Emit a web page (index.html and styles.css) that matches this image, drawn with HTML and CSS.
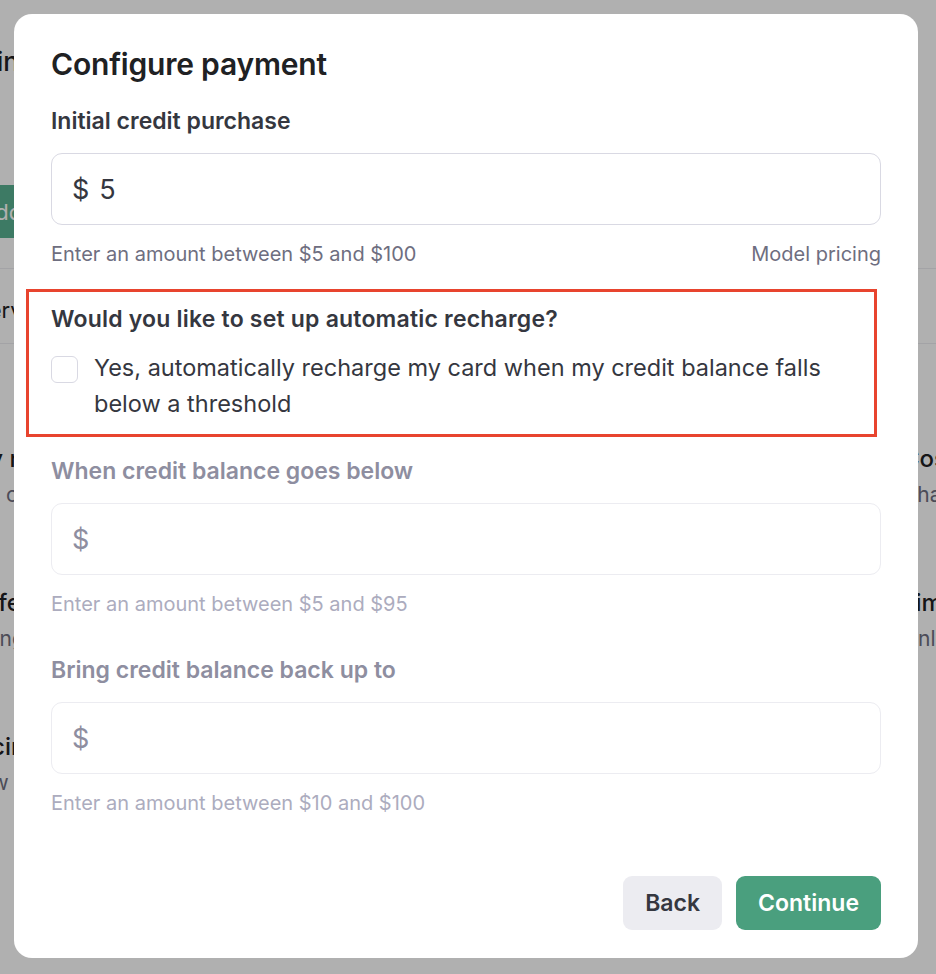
FILE: index.html
```html
<!DOCTYPE html>
<html lang="en">
<head>
    <meta charset="UTF-8">
    <meta name="viewport" content="width=device-width, initial-scale=1.0">
    <title>Configure payment</title>
    <link rel="stylesheet" href="styles.css">
</head>
<body>
    <!-- Billing page behind the dialog -->
    <div class="page">
        <h1 class="page-title">Billing</h1>
        <button class="page-button">Add payment details</button>
        <nav class="page-tabs">
            <span>Overview</span>
        </nav>
        <div class="page-grid">
            <div class="tile">
                <h3>Key rotation</h3>
                <p>Add or change card</p>
            </div>
            <div class="tile tile-right">
                <h3>Costs</h3>
                <p>Charts</p>
            </div>
            <div class="tile">
                <h3>Preferences</h3>
                <p>Change name</p>
            </div>
            <div class="tile tile-right">
                <h3>Limits</h3>
                <p>Only</p>
            </div>
            <div class="tile">
                <h3>Pricing</h3>
                <p>View rates</p>
            </div>
        </div>
    </div>

    <div class="overlay"></div>

    <div class="modal" role="dialog" aria-labelledby="modal-title">
        <h2 class="modal-title" id="modal-title">Configure payment</h2>

        <label class="field-label" for="initial-amount">Initial credit purchase</label>
        <div class="amount-input">
            <span class="currency">$</span>
            <input id="initial-amount" type="text" value="5">
        </div>
        <div class="field-hint">
            <span>Enter an amount between $5 and $100</span>
            <a href="#" class="hint-link">Model pricing</a>
        </div>

        <!-- highlighted question -->
        <section class="recharge">
            <h3 class="recharge-title">Would you like to set up automatic recharge?</h3>
            <label class="check-row">
                <input type="checkbox" class="checkbox">
                <span>Yes, automatically recharge my card when my credit balance falls below a threshold</span>
            </label>
        </section>

        <label class="field-label is-disabled after-recharge" for="threshold">When credit balance goes below</label>
        <div class="amount-input is-disabled">
            <span class="currency">$</span>
            <input id="threshold" type="text" disabled>
        </div>
        <div class="field-hint is-disabled">
            <span>Enter an amount between $5 and $95</span>
        </div>

        <label class="field-label is-disabled gap-top" for="target">Bring credit balance back up to</label>
        <div class="amount-input is-disabled">
            <span class="currency">$</span>
            <input id="target" type="text" disabled>
        </div>
        <div class="field-hint is-disabled">
            <span>Enter an amount between $10 and $100</span>
        </div>

        <div class="modal-actions">
            <button class="btn btn-secondary">Back</button>
            <button class="btn btn-primary">Continue</button>
        </div>
    </div>
</body>
</html>
```

FILE: styles.css
```css
* {
    margin: 0;
    padding: 0;
    box-sizing: border-box;
}

body {
    font-family: Inter, "Noto Sans", Arial, sans-serif;
    background: #fff;
    color: #202123;
    width: 936px;
    height: 974px;
    overflow: hidden;
}

/* Page behind the dialog */
.page {
    margin-left: -40px;
    width: 1400px;
    padding-top: 44px;
}

.page-title {
    font-size: 26px;
    font-weight: 500;
    line-height: 36px;
    color: #202123;
}

.page-button {
    margin-top: 105px;
    height: 53px;
    padding: 0 20px;
    border: none;
    border-radius: 6px;
    background: #59b191;
    color: #fff;
    font: inherit;
    font-size: 22px;
}

.page-tabs {
    margin-top: 30px;
    border-top: 1px solid #ececf1;
    border-bottom: 1px solid #ececf1;
    padding: 30px 0 22px;
    font-size: 22px;
    line-height: 22px;
    color: #202123;
}

.page-grid {
    display: grid;
    grid-template-columns: 470px 470px 470px;
    row-gap: 80px;
    padding-top: 100px;
}

.tile {
    grid-column: 1;
}

.tile-right {
    grid-column: 3;
    padding-left: 2px;
}

.tile h3 {
    font-size: 24px;
    font-weight: 500;
    line-height: 30px;
    color: #202123;
}

.tile p {
    margin-top: 8px;
    font-size: 21px;
    line-height: 26px;
    color: #6e6e80;
}

.overlay {
    position: fixed;
    inset: 0;
    background: rgba(0, 0, 0, 0.31);
}

/* Dialog */
.modal {
    position: fixed;
    left: 14px;
    top: 14px;
    width: 904px;
    height: 944px;
    display: flex;
    flex-direction: column;
    padding: 32px 37px 28px;
    background: #fff;
    border-radius: 18px;
}

.modal-title {
    font-size: 30px;
    font-weight: 600;
    line-height: 36px;
    letter-spacing: -0.2px;
    color: #202123;
}

.field-label {
    display: block;
    margin-top: 25px;
    font-size: 23px;
    font-weight: 600;
    line-height: 28px;
    color: #353740;
}

.field-label.after-recharge {
    margin-top: 20px;
}

.field-label.gap-top {
    margin-top: 40px;
}

.amount-input {
    display: flex;
    align-items: center;
    margin-top: 18px;
    height: 72px;
    padding: 0 20px;
    border: 1.5px solid #d9d9e3;
    border-radius: 11px;
    font-size: 27px;
    color: #353740;
}

.amount-input input {
    flex: 1;
    margin-left: 10px;
    border: none;
    outline: none;
    background: transparent;
    font: inherit;
    color: inherit;
}

.field-hint {
    display: flex;
    justify-content: space-between;
    margin-top: 17px;
    font-size: 20px;
    line-height: 24px;
    color: #6e6e80;
}

.hint-link {
    color: #6e6e80;
    text-decoration: none;
}

.is-disabled,
.field-label.is-disabled {
    color: #8e8ea0;
}

.amount-input.is-disabled {
    border-color: #ececf1;
    color: #8e8ea0;
}

.field-hint.is-disabled {
    color: #acacbe;
}

/* Red highlight around the recharge question */
.recharge {
    margin: 23px 4px 0 -25px;
    padding: 13px 0 12px 22px;
    border: 3px solid #e8442e;
}

.recharge-title {
    font-size: 23px;
    font-weight: 600;
    line-height: 28px;
    letter-spacing: 0.2px;
    color: #353740;
}

.check-row {
    display: flex;
    gap: 16px;
    margin-top: 17px;
    font-size: 23.5px;
    line-height: 36px;
    color: #353740;
}

.checkbox {
    appearance: none;
    flex: none;
    width: 27px;
    height: 27px;
    margin-top: 6px;
    border: 1.5px solid #d9d9e3;
    border-radius: 6px;
    background: #fff;
}

.modal-actions {
    display: flex;
    justify-content: flex-end;
    gap: 14px;
    margin-top: auto;
}

.btn {
    height: 54px;
    padding: 0 22px;
    border: none;
    border-radius: 9px;
    font: inherit;
    font-size: 23px;
    font-weight: 600;
    cursor: pointer;
}

.btn-secondary {
    background: #ececf1;
    color: #353740;
}

.btn-primary {
    background: #4a9f7e;
    color: #fff;
}
```
